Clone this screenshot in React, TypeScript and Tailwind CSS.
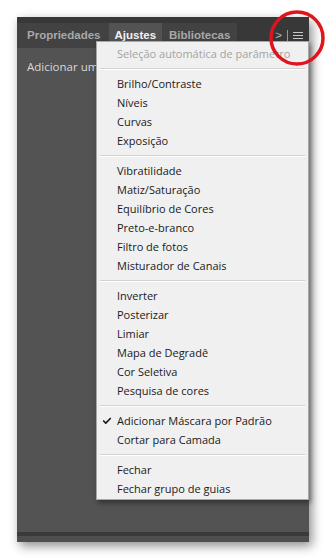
import { Check } from 'lucide-react';

const groups: string[][] = [
  ['Brilho/Contraste', 'Níveis', 'Curvas', 'Exposição'],
  ['Vibratilidade', 'Matiz/Saturação', 'Equilíbrio de Cores', 'Preto-e-branco', 'Filtro de fotos', 'Misturador de Canais'],
  ['Inverter', 'Posterizar', 'Limiar', 'Mapa de Degradê', 'Cor Seletiva', 'Pesquisa de cores'],
  ['Adicionar Máscara por Padrão', 'Cortar para Camada'],
  ['Fechar', 'Fechar grupo de guias'],
];

function Separator() {
  return <div className="mx-[3px] my-[5px] h-px bg-[#d2d2d2] shadow-[0_1px_0_#ffffff]" />;
}

function Item({ label, checked, disabled }: { label: string; checked?: boolean; disabled?: boolean }) {
  return (
    <div className={`relative h-[19px] pl-[20px] leading-[19px] ${disabled ? 'text-[#a3a3a3]' : 'text-[#1a1a1a]'}`}>
      {checked && <Check className="absolute left-[5px] top-[5px] h-[10px] w-[10px]" strokeWidth={4} />}
      {label}
    </div>
  );
}

export default function App() {
  return (
    <div className="relative h-[559px] w-[326px] overflow-hidden bg-white pl-[17px] pt-[17px]">
      <div className="relative flex h-[525px] w-[292px] flex-col shadow-[3px_4px_10px_rgba(0,0,0,0.45)]">
        <div className="flex h-[31px] items-end bg-[#383838] font-['Liberation_Sans',sans-serif] text-[11.5px] font-bold">
          <div className="flex h-[25px] items-center bg-[#424242] pl-[10px] pr-[8px] text-[#a8a8a8]">Propriedades</div>
          <div className="flex h-[25px] items-center bg-[#535353] px-[6px] text-[#f2f2f2]">Ajustes</div>
          <div className="flex h-[25px] items-center bg-[#424242] px-[7px] text-[#a8a8a8]">Bibliotecas</div>
          <div className="flex-1" />
          <div className="flex h-[25px] items-center gap-[5px] pr-[6px] text-[#b8b8b8]">
            <span className="font-normal">&gt;</span>
            <span className="h-[12px] w-px bg-[#9a9a9a]" />
            <svg width="10" height="9" viewBox="0 0 10 9">
              <path d="M0 1.5h10M0 4.5h10M0 7.5h10" stroke="#c8c8c8" strokeWidth="1.2" />
            </svg>
          </div>
        </div>
        <div className="flex-1 bg-[#535353] px-[10px] pt-[10px] font-['Open_Sans',sans-serif] text-[11.5px] text-[#d8d8d8]">
          Adicionar um ajuste
        </div>
        <div className="h-[4px] bg-[#3a3a3a]" />
        <div className="h-[6px] bg-[#4e4e4e]" />

        <div className="absolute left-[79px] top-[24px] w-[213px] border border-[#a8a8a8] bg-[#f0f0f0] pt-[2px] pb-[1px] font-['Open_Sans',sans-serif] text-[11px] shadow-[2px_3px_5px_rgba(0,0,0,0.4)]">
          <Item label="Seleção automática de parâmetro" disabled />
          {groups.map((g, i) => (
            <div key={i}>
              <Separator />
              {g.map((label) => (
                <Item key={label} label={label} checked={label === 'Adicionar Máscara por Padrão'} />
              ))}
            </div>
          ))}
        </div>
      </div>

      <svg className="absolute left-[266px] top-[9px]" width="60" height="58" viewBox="0 0 60 58">
        <ellipse cx="31" cy="29" rx="26" ry="26" fill="none" stroke="#e0141c" strokeWidth="3.5" />
      </svg>
    </div>
  );
}
